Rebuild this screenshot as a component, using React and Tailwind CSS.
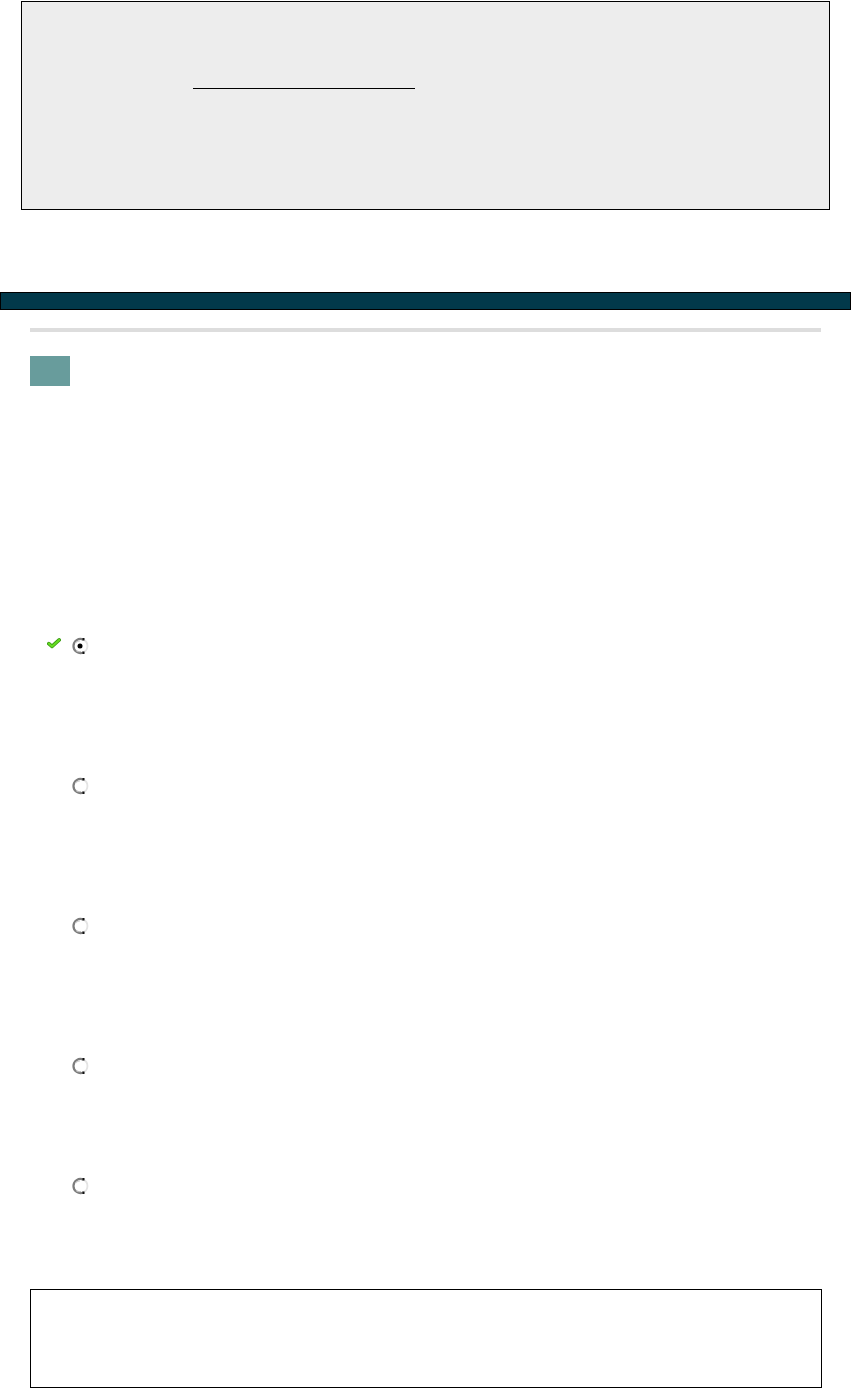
import React from "react";

function Radio({ checked }) {
  return (
    <svg width="18" height="18" viewBox="0 0 18 18" className="block">
      <circle cx="9" cy="9" r="7.5" fill="#ffffff" />
      <path d="M12.3 2.6 A7 7 0 1 0 12.3 15.4" fill="none" stroke="#7c7c7c" strokeWidth="2.2" />
      <path d="M12.3 2.6 A7 7 0 0 1 12.3 15.4" fill="none" stroke="#e4e4e4" strokeWidth="1.8" />
      <path d="M4.6 6 A5 5 0 0 1 9 4" fill="none" stroke="#cfcfcf" strokeWidth="1.2" />
      <path d="M5 13.5 A5.5 5.5 0 0 0 10 14.5" fill="none" stroke="#bdbdbd" strokeWidth="1.2" />
      <rect x="11.5" y="1" width="2" height="2.5" fill="#111" />
      <rect x="11.5" y="14.5" width="2" height="2.5" fill="#111" />
      {checked && <circle cx="9" cy="9" r="2.5" fill="#000" />}
    </svg>
  );
}

function Check() {
  return (
    <svg width="14" height="11" viewBox="0 0 14 11" className="block">
      <path d="M1.8 5.6 L5 8.4 L12.2 1.9" fill="none" stroke="#3a9a12" strokeWidth="3.6" strokeLinejoin="round" strokeLinecap="round" />
      <path d="M1.8 5.6 L5 8.4 L12.2 1.9" fill="none" stroke="#66dd22" strokeWidth="2" strokeLinejoin="round" strokeLinecap="round" />
    </svg>
  );
}

export default function App() {
  const rows = [
    { checked: true, mb: "mb-[122px]" },
    { checked: false, mb: "mb-[122px]" },
    { checked: false, mb: "mb-[122px]" },
    { checked: false, mb: "mb-[102px]" },
    { checked: false, mb: "mb-0" },
  ];
  return (
    <div className="w-[851px] flex flex-col bg-white" style={{ fontFamily: "'Liberation Sans', Arial, sans-serif" }}>
      <div className="mt-px ml-[21px] w-[809px] h-[209px] border border-black bg-[#ededed] pt-[86px] pl-[171px]">
        <div className="w-[222px] h-[1px] bg-black" />
      </div>

      <div className="mt-[82px] w-[851px] h-[18px] border border-black bg-[#02394a]" />

      <div className="mt-[18px] ml-[30px] w-[791px] h-[4px] bg-[#dddddd]" />

      <div className="mt-[24px] ml-[30px] w-[40px] h-[30px] bg-[#689c9c]" />

      <div className="mt-[251px] flex flex-col">
        {rows.map((r, i) => (
          <div key={i} className={`flex items-center pl-[47px] h-[18px] ${r.mb}`}>
            <div className="w-[14px] h-[11px] -mt-[6px]">{r.checked && <Check />}</div>
            <div className="ml-[10px]">
              <Radio checked={r.checked} />
            </div>
          </div>
        ))}
      </div>

      <div className="mt-[94px] ml-[30px] w-[792px] h-[99px] border border-black bg-white" />
    </div>
  );
}
